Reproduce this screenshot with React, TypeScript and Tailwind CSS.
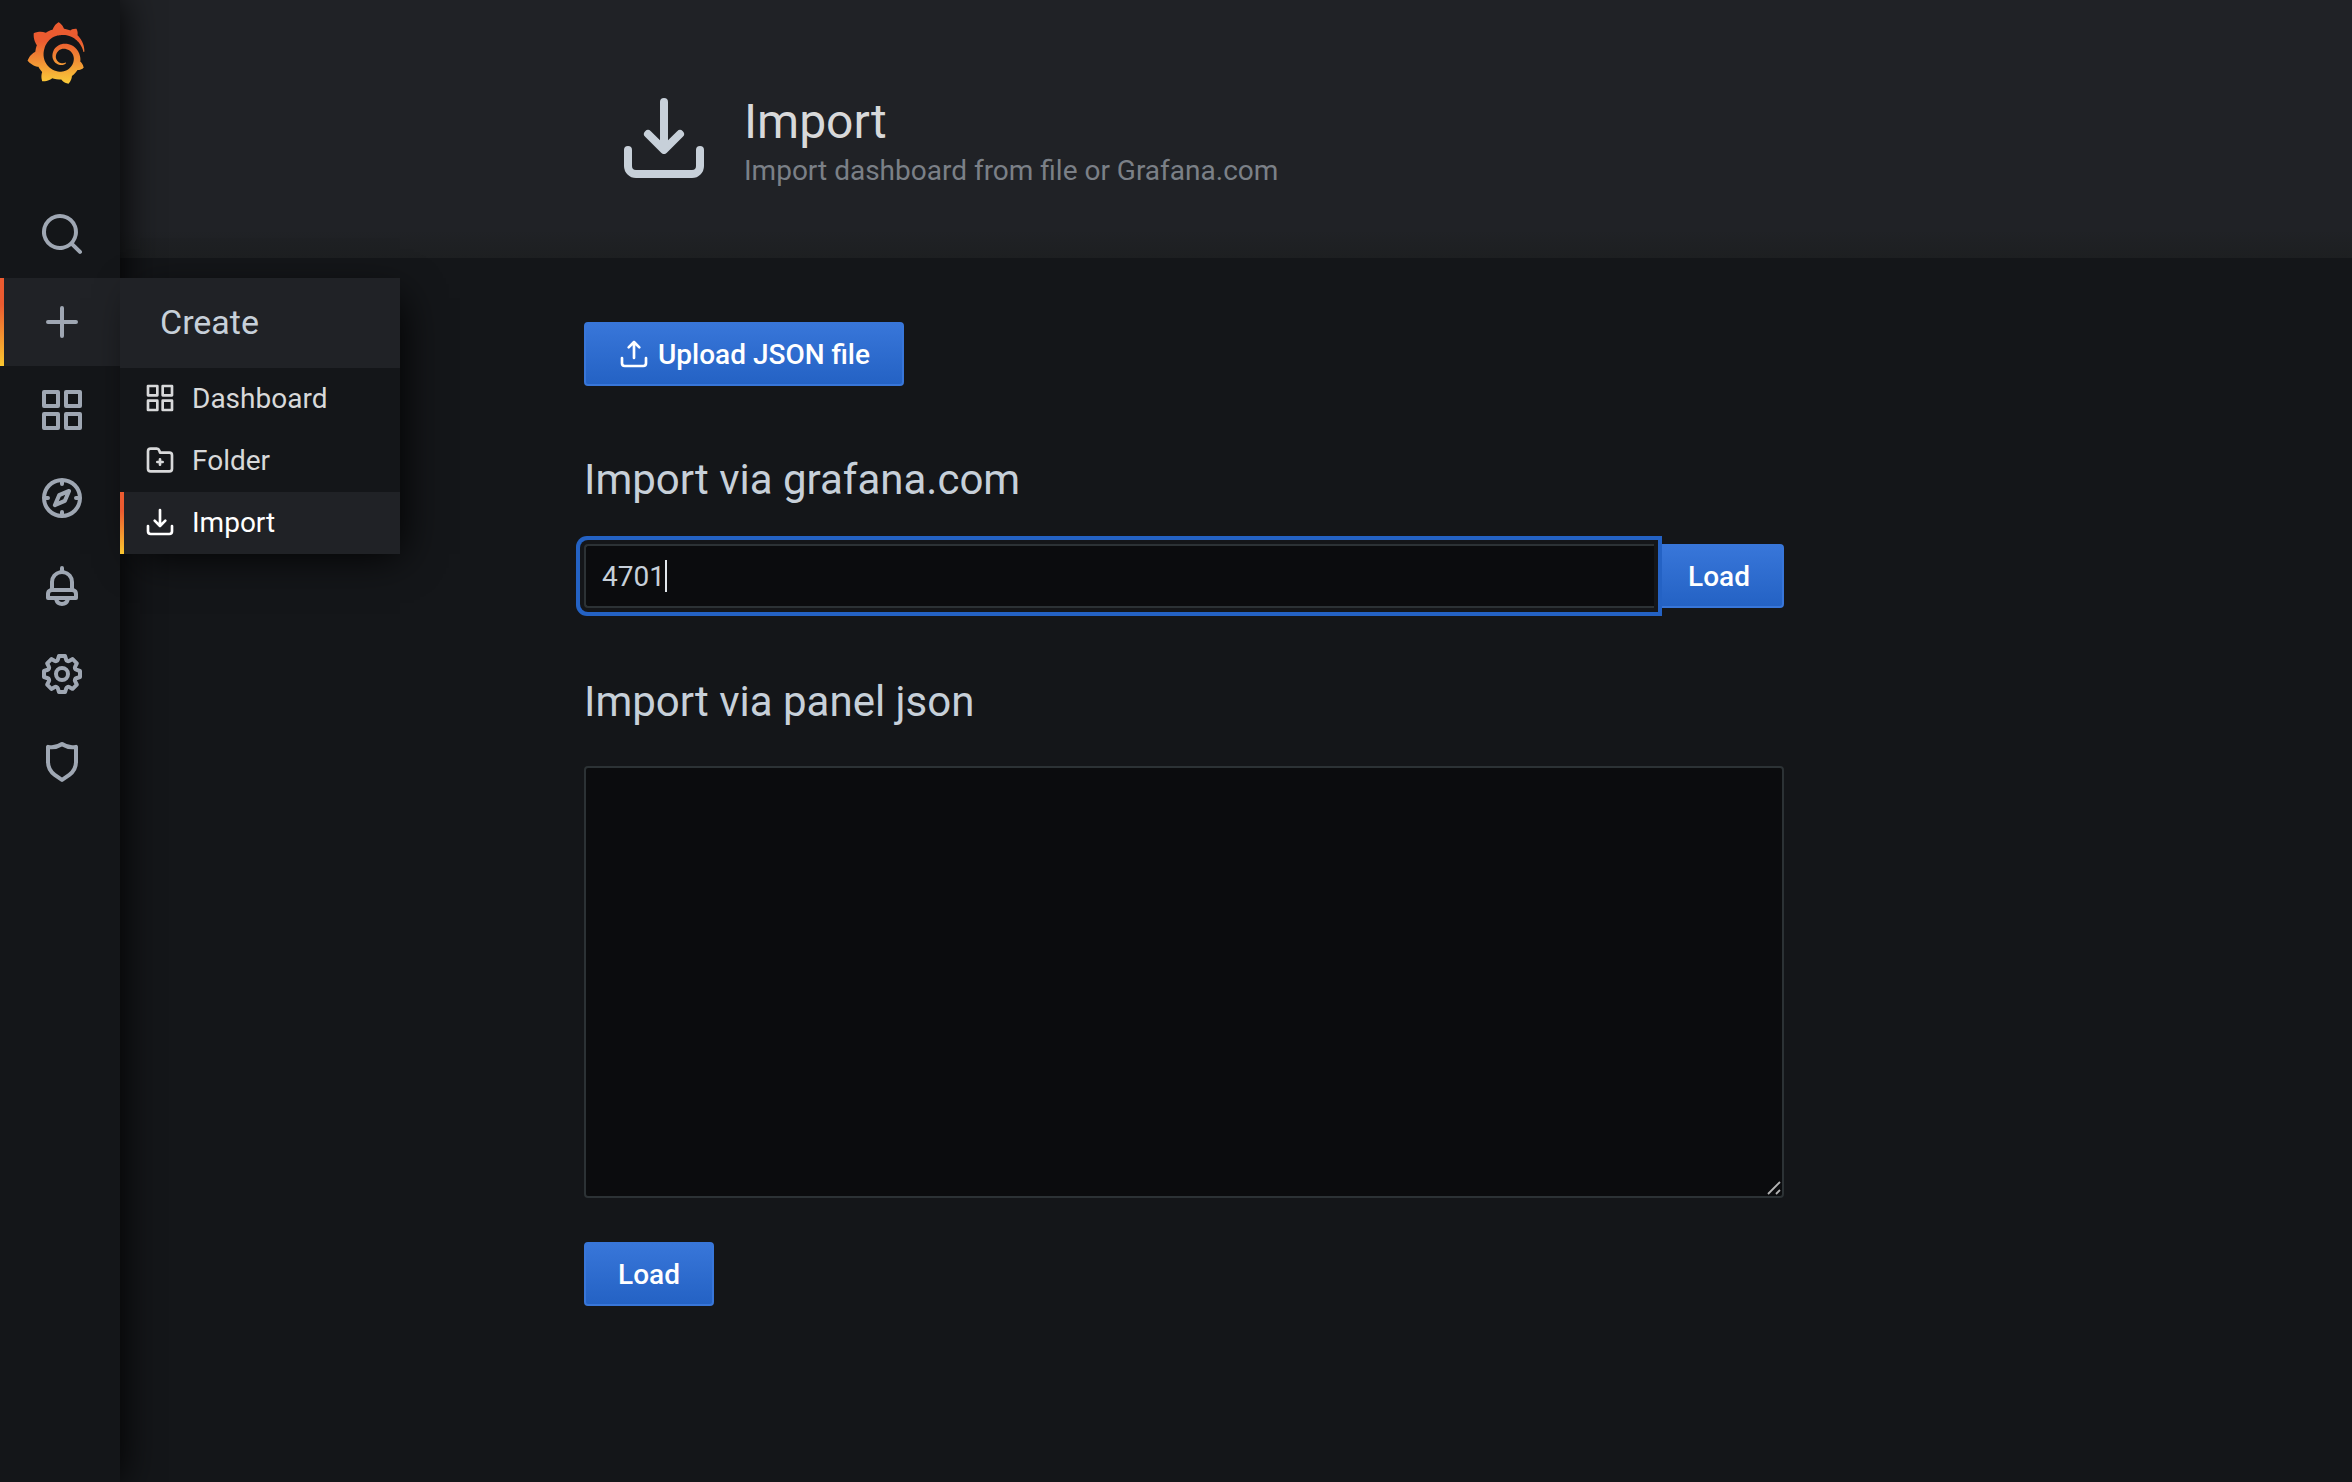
import React from 'react';

const ICONS = {
  search:
    'M21.71,20.29,18,16.61A9,9,0,1,0,16.61,18l3.68,3.68a1,1,0,0,0,1.42,0A1,1,0,0,0,21.71,20.29ZM11,18a7,7,0,1,1,7-7A7,7,0,0,1,11,18Z',
  plus: 'M19,11H13V5a1,1,0,0,0-2,0v6H5a1,1,0,0,0,0,2h6v6a1,1,0,0,0,2,0V13h6a1,1,0,0,0,0-2Z',
  apps:
    'M10,13H3a1,1,0,0,0-1,1v7a1,1,0,0,0,1,1h7a1,1,0,0,0,1-1V14A1,1,0,0,0,10,13ZM9,20H4V15H9ZM21,2H14a1,1,0,0,0-1,1v7a1,1,0,0,0,1,1h7a1,1,0,0,0,1-1V3A1,1,0,0,0,21,2ZM20,9H15V4h5Zm1,4H14a1,1,0,0,0-1,1v7a1,1,0,0,0,1,1h7a1,1,0,0,0,1-1V14A1,1,0,0,0,21,13Zm-1,7H15V15h5ZM10,2H3A1,1,0,0,0,2,3v7a1,1,0,0,0,1,1h7a1,1,0,0,0,1-1V3A1,1,0,0,0,10,2ZM9,9H4V4H9Z',
  compass:
    'M12,2A10,10,0,1,0,22,12,10,10,0,0,0,12,2Zm1,17.93V19a1,1,0,0,0-2,0v.93A8,8,0,0,1,4.07,13H5a1,1,0,0,0,0-2H4.07A8,8,0,0,1,11,4.07V5a1,1,0,0,0,2,0V4.07A8,8,0,0,1,19.93,11H19a1,1,0,0,0,0,2h.93A8,8,0,0,1,13,19.93ZM15.14,7.55l-5,2.12a1,1,0,0,0-.52.52l-2.12,5a1,1,0,0,0,.21,1.1,1,1,0,0,0,.7.3.93.93,0,0,0,.4-.09l5-2.12a1,1,0,0,0,.52-.52l2.12-5a1,1,0,0,0-1.31-1.31Zm-2.49,5.1-2.28,1,1-2.28,2.28-1Z',
  bell:
    'M18,13.18V10a6,6,0,0,0-5-5.91V3a1,1,0,0,0-2,0V4.09A6,6,0,0,0,6,10v3.18A3,3,0,0,0,4,16v2a1,1,0,0,0,1,1H8.14a4,4,0,0,0,7.72,0H19a1,1,0,0,0,1-1V16A3,3,0,0,0,18,13.18ZM8,10a4,4,0,0,1,8,0v3H8Zm4,10a2,2,0,0,1-1.72-1h3.44A2,2,0,0,1,12,20Zm6-3H6V16a1,1,0,0,1,1-1H17a1,1,0,0,1,1,1Z',
  cog:
    'M21.32,9.55l-1.89-.63.89-1.78A1,1,0,0,0,20.13,6L18,3.87a1,1,0,0,0-1.15-.19l-1.78.89-.63-1.89A1,1,0,0,0,13.5,2h-3a1,1,0,0,0-.95.68L8.92,4.57,7.14,3.68A1,1,0,0,0,6,3.87L3.87,6a1,1,0,0,0-.19,1.15l.89,1.78-1.89.63A1,1,0,0,0,2,10.5v3a1,1,0,0,0,.68.95l1.89.63-.89,1.78A1,1,0,0,0,3.87,18L6,20.13a1,1,0,0,0,1.15.19l1.78-.89.63,1.89a1,1,0,0,0,.95.68h3a1,1,0,0,0,.95-.68l.63-1.89,1.78.89A1,1,0,0,0,18,20.13L20.13,18a1,1,0,0,0,.19-1.15l-.89-1.78,1.89-.63A1,1,0,0,0,22,13.5v-3A1,1,0,0,0,21.32,9.55ZM20,12.78l-1.2.4A2,2,0,0,0,17.64,16l.57,1.14-1.1,1.1L16,17.64a2,2,0,0,0-2.79,1.16l-.4,1.2H11.22l-.4-1.2A2,2,0,0,0,8,17.64l-1.14.57-1.1-1.1L6.36,16A2,2,0,0,0,5.2,13.18L4,12.78V11.22l1.2-.4A2,2,0,0,0,6.36,8L5.79,6.89l1.1-1.1L8,6.36A2,2,0,0,0,10.82,5.2l.4-1.2h1.56l.4,1.2A2,2,0,0,0,16,6.36l1.14-.57,1.1,1.1L17.64,8a2,2,0,0,0,1.16,2.79l1.2.4ZM12,8a4,4,0,1,0,4,4A4,4,0,0,0,12,8Zm0,6a2,2,0,1,1,2-2A2,2,0,0,1,12,14Z',
  shield:
    'M19.63,3.65a1,1,0,0,0-.84-.2,8,8,0,0,1-6.22-1.27,1,1,0,0,0-1.14,0A8,8,0,0,1,5.21,3.45a1,1,0,0,0-.84.2A1,1,0,0,0,4,4.43v7.45a9,9,0,0,0,3.77,7.33l3.65,2.6a1,1,0,0,0,1.16,0l3.65-2.6A9,9,0,0,0,20,11.88V4.43A1,1,0,0,0,19.63,3.65ZM18,11.88a7,7,0,0,1-2.93,5.7L12,19.77,8.93,17.58A7,7,0,0,1,6,11.88V5.58a10,10,0,0,0,6-1.39,10,10,0,0,0,6,1.39Z',
  folderPlus:
    'M14,12.5H13v-1a1,1,0,0,0-2,0v1H10a1,1,0,0,0,0,2h1v1a1,1,0,0,0,2,0v-1h1a1,1,0,0,0,0-2Zm5-7H12.72l-.32-1a3,3,0,0,0-2.84-2H5a3,3,0,0,0-3,3v13a3,3,0,0,0,3,3H19a3,3,0,0,0,3-3V8.5A3,3,0,0,0,19,5.5Zm1,13a1,1,0,0,1-1,1H5a1,1,0,0,1-1-1V5.5a1,1,0,0,1,1-1H9.56a1,1,0,0,1,.95.68l.54,1.64A1,1,0,0,0,12,7.5h7a1,1,0,0,1,1,1Z',
  import:
    'M21,14a1,1,0,0,0-1,1v4a1,1,0,0,1-1,1H5a1,1,0,0,1-1-1V15a1,1,0,0,0-2,0v4a3,3,0,0,0,3,3H19a3,3,0,0,0,3-3V15A1,1,0,0,0,21,14Zm-9.71,1.71a1,1,0,0,0,.33.21.94.94,0,0,0,.76,0,1,1,0,0,0,.33-.21l4-4a1,1,0,0,0-1.42-1.42L13,12.59V3a1,1,0,0,0-2,0v9.59l-2.29-2.3a1,1,0,1,0-1.42,1.42Z',
  upload:
    'M8.71,7.71,11,5.41V15a1,1,0,0,0,2,0V5.41l2.29,2.3a1,1,0,0,0,1.42,0,1,1,0,0,0,0-1.42l-4-4a1,1,0,0,0-.33-.21,1,1,0,0,0-.76,0,1,1,0,0,0-.33.21l-4,4A1,1,0,1,0,8.71,7.71ZM21,14a1,1,0,0,0-1,1v4a1,1,0,0,1-1,1H5a1,1,0,0,1-1-1V15a1,1,0,0,0-2,0v4a3,3,0,0,0,3,3H19a3,3,0,0,0,3-3V15A1,1,0,0,0,21,14Z',
};

type IconName = keyof typeof ICONS;

function Icon({ name, className }: { name: IconName; className: string }) {
  return (
    <svg viewBox="0 0 24 24" fill="currentColor" className={className} aria-hidden="true">
      <path d={ICONS[name]} />
    </svg>
  );
}

function GrafanaLogo() {
  return (
    <svg viewBox="0 0 351 365" className="h-[62px] w-[60px]" aria-label="Grafana">
      <defs>
        <linearGradient id="logo" gradientUnits="userSpaceOnUse" x1="175.5" y1="445.5" x2="175.5" y2="114">
          <stop offset="0" stopColor="#FFF13C" />
          <stop offset="1" stopColor="#EB5B30" />
        </linearGradient>
      </defs>
      <path
        fill="url(#logo)"
        d="M342,161.2c-0.6-6.1-1.6-13.1-3.6-20.9c-2-7.7-5-16.2-9.4-25c-4.4-8.8-10.1-17.9-17.5-26.8c-2.9-3.5-6.1-6.9-9.5-10.2c5.1-20.3-6.2-37.9-6.2-37.9c-19.5-1.2-31.9,6.1-36.5,9.4c-0.8-0.3-1.5-0.7-2.3-1c-3.3-1.3-6.7-2.6-10.3-3.7c-3.5-1.1-7.1-2.1-10.8-3c-3.7-0.9-7.4-1.6-11.2-2.2c-0.7-0.1-1.3-0.2-2-0.3c-8.5-27.2-32.9-38.6-32.9-38.6c-27.3,17.3-32.4,41.5-32.4,41.5s-0.1,0.5-0.3,1.4c-1.5,0.4-3,0.9-4.5,1.3c-2.1,0.6-4.2,1.4-6.2,2.2c-2.1,0.8-4.1,1.6-6.2,2.5c-4.1,1.8-8.2,3.8-12.2,6c-3.9,2.2-7.7,4.6-11.4,7.1c-0.5-0.2-1-0.4-1-0.4c-37.8-14.4-71.3,2.9-71.3,2.9c-3.1,40.2,15.1,65.5,18.7,70.1c-0.9,2.5-1.7,5-2.5,7.5c-2.8,9.1-4.9,18.4-6.2,28.1c-0.2,1.4-0.4,2.8-0.5,4.2C18.8,192.7,8.5,228,8.5,228c29.1,33.5,63.1,35.6,63.1,35.6c0,0,0.1-0.1,0.1-0.1c4.3,7.7,9.3,15,14.9,21.9c2.4,2.9,4.8,5.6,7.4,8.3c-10.6,30.4,1.5,55.6,1.5,55.6c32.4,1.2,53.7-14.2,58.2-17.7c3.2,1.1,6.5,2.1,9.8,2.9c10,2.6,20.2,4.1,30.4,4.5c2.5,0.1,5.1,0.2,7.6,0.1l1.2,0l0.8,0l1.6,0l1.6-0.1l0,0.1c15.3,21.8,42.1,24.9,42.1,24.9c19.1-20.1,20.2-40.1,20.2-44.4l0,0c0,0,0-0.1,0-0.3c0-0.4,0-0.6,0-0.6l0,0c0-0.3,0-0.6,0-0.9c4-2.8,7.8-5.8,11.4-9.1c7.6-6.9,14.3-14.8,19.9-23.3c0.5-0.8,1-1.6,1.5-2.4c21.6,1.2,36.9-13.4,36.9-13.4c-3.6-22.5-16.4-33.5-19.1-35.6l0,0c0,0-0.1-0.1-0.3-0.2c-0.2-0.1-0.2-0.2-0.2-0.2c0,0,0,0,0,0c-0.1-0.1-0.3-0.2-0.5-0.3c0.1-1.4,0.2-2.7,0.3-4.1c0.2-2.4,0.2-4.9,0.2-7.3l0-1.8l0-0.9l0-0.5c0-0.6,0-0.4,0-0.6l-0.1-1.5l-0.1-2c0-0.7-0.1-1.3-0.2-1.9c-0.1-0.6-0.1-1.3-0.2-1.9l-0.2-1.9l-0.3-1.9c-0.4-2.5-0.8-4.9-1.4-7.4c-2.3-9.7-6.1-18.9-11-27.2c-5-8.3-11.2-15.6-18.3-21.8c-7-6.2-14.9-11.2-23.1-14.9c-8.3-3.7-16.9-6.1-25.5-7.2c-4.3-0.6-8.6-0.8-12.9-0.7l-1.6,0l-0.4,0c-0.1,0-0.6,0-0.5,0l-0.7,0l-1.6,0.1c-0.6,0-1.2,0.1-1.7,0.1c-2.2,0.2-4.4,0.5-6.5,0.9c-8.6,1.6-16.7,4.7-23.8,9c-7.1,4.3-13.3,9.6-18.3,15.6c-5,6-8.9,12.7-11.6,19.6c-2.7,6.9-4.2,14.1-4.6,21c-0.1,1.7-0.1,3.5-0.1,5.2c0,0.4,0,0.9,0,1.3l0.1,1.4c0.1,0.8,0.1,1.7,0.2,2.5c0.3,3.5,1,6.9,1.9,10.1c1.9,6.5,4.9,12.4,8.6,17.4c3.7,5,8.2,9.1,12.9,12.4c4.7,3.2,9.8,5.5,14.8,7c5,1.5,10,2.1,14.7,2.1c0.6,0,1.2,0,1.7,0c0.3,0,0.6,0,0.9,0c0.3,0,0.6,0,0.9-0.1c0.5,0,1-0.1,1.5-0.1c0.1,0,0.3,0,0.4-0.1l0.5-0.1c0.3,0,0.6-0.1,0.9-0.1c0.6-0.1,1.1-0.2,1.7-0.3c0.6-0.1,1.1-0.2,1.6-0.4c1.1-0.2,2.1-0.6,3.1-0.9c2-0.7,4-1.5,5.7-2.4c1.8-0.9,3.4-2,5-3c0.4-0.3,0.9-0.6,1.3-1c1.6-1.3,1.9-3.7,0.6-5.3c-1.1-1.4-3.1-1.8-4.7-0.9c-0.4,0.2-0.8,0.4-1.2,0.6c-1.4,0.7-2.8,1.3-4.3,1.8c-1.5,0.5-3.1,0.9-4.7,1.2c-0.8,0.1-1.6,0.2-2.5,0.3c-0.4,0-0.8,0.1-1.3,0.1c-0.4,0-0.9,0-1.2,0c-0.4,0-0.8,0-1.2,0c-0.5,0-1,0-1.5-0.1c0,0-0.3,0-0.1,0l-0.2,0l-0.3,0c-0.2,0-0.5,0-0.7-0.1c-0.5-0.1-0.9-0.1-1.4-0.2c-3.7-0.5-7.4-1.6-10.9-3.2c-3.6-1.6-7-3.8-10.1-6.6c-3.1-2.8-5.8-6.1-7.9-9.9c-2.1-3.8-3.6-8-4.3-12.4c-0.3-2.2-0.5-4.5-0.4-6.7c0-0.6,0.1-1.2,0.1-1.8c0,0.2,0-0.1,0-0.1l0-0.2l0-0.5c0-0.3,0.1-0.6,0.1-0.9c0.1-1.2,0.3-2.4,0.5-3.6c1.7-9.6,6.5-19,13.9-26.1c1.9-1.8,3.9-3.4,6-4.9c2.1-1.5,4.4-2.8,6.8-3.9c2.4-1.1,4.8-2,7.4-2.7c2.5-0.7,5.1-1.1,7.8-1.4c1.3-0.1,2.6-0.2,4-0.2c0.4,0,0.6,0,0.9,0l1.1,0l0.7,0c0.3,0,0,0,0.1,0l0.3,0l1.1,0.1c2.9,0.2,5.7,0.6,8.5,1.3c5.6,1.2,11.1,3.3,16.2,6.1c10.2,5.7,18.9,14.5,24.2,25.1c2.7,5.3,4.6,11,5.5,16.9c0.2,1.5,0.4,3,0.5,4.5l0.1,1.1l0.1,1.1c0,0.4,0,0.8,0,1.1c0,0.4,0,0.8,0,1.1l0,1l0,1.1c0,0.7-0.1,1.9-0.1,2.6c-0.1,1.6-0.3,3.3-0.5,4.9c-0.2,1.6-0.5,3.2-0.8,4.8c-0.3,1.6-0.7,3.2-1.1,4.7c-0.8,3.1-1.8,6.2-3,9.3c-2.4,6-5.6,11.8-9.4,17.1c-7.7,10.6-18.2,19.2-30.2,24.7c-6,2.7-12.3,4.7-18.8,5.7c-3.2,0.6-6.5,0.9-9.8,1l-0.6,0l-0.5,0l-1.1,0l-1.6,0l-0.8,0c0.4,0-0.1,0-0.1,0l-0.3,0c-1.8,0-3.5-0.1-5.3-0.3c-7-0.5-13.9-1.8-20.7-3.7c-6.7-1.9-13.2-4.6-19.4-7.8c-12.3-6.6-23.4-15.6-32-26.5c-4.3-5.4-8.1-11.3-11.2-17.4c-3.1-6.1-5.6-12.6-7.4-19.1c-1.8-6.6-2.9-13.3-3.4-20.1l-0.1-1.3l0-0.3l0-0.3l0-0.6l0-1.1l0-0.3l0-0.4l0-0.8l0-1.6l0-0.3c0,0,0,0.1,0-0.1l0-0.6c0-0.8,0-1.7,0-2.5c0.1-3.3,0.4-6.8,0.8-10.2c0.4-3.4,1-6.9,1.7-10.3c0.7-3.4,1.5-6.8,2.5-10.2c1.9-6.7,4.3-13.2,7.1-19.3c5.7-12.2,13.1-23.1,22-31.8c2.2-2.2,4.5-4.2,6.9-6.2c2.4-1.9,4.9-3.7,7.5-5.4c2.5-1.7,5.2-3.2,7.9-4.6c1.3-0.7,2.7-1.4,4.1-2c0.7-0.3,1.4-0.6,2.1-0.9c0.7-0.3,1.4-0.6,2.1-0.9c2.8-1.2,5.7-2.2,8.7-3.1c0.7-0.2,1.5-0.4,2.2-0.7c0.7-0.2,1.5-0.4,2.2-0.6c1.5-0.4,3-0.8,4.5-1.1c0.7-0.2,1.5-0.3,2.3-0.5c0.8-0.2,1.5-0.3,2.3-0.5c0.8-0.1,1.5-0.3,2.3-0.4l1.1-0.2l1.2-0.2c0.8-0.1,1.5-0.2,2.3-0.3c0.9-0.1,1.7-0.2,2.6-0.3c0.7-0.1,1.9-0.2,2.6-0.3c0.5-0.1,1.1-0.1,1.6-0.2l1.1-0.1l0.5-0.1l0.6,0c0.9-0.1,1.7-0.1,2.6-0.2l1.3-0.1c0,0,0.5,0,0.1,0l0.3,0l0.6,0c0.7,0,1.5-0.1,2.2-0.1c2.9-0.1,5.9-0.1,8.8,0c5.8,0.2,11.5,0.9,17,1.9c11.1,2.1,21.5,5.6,31,10.3c9.5,4.6,17.9,10.3,25.3,16.5c0.5,0.4,0.9,0.8,1.4,1.2c0.4,0.4,0.9,0.8,1.3,1.2c0.9,0.8,1.7,1.6,2.6,2.4c0.9,0.8,1.7,1.6,2.5,2.4c0.8,0.8,1.6,1.6,2.4,2.5c3.1,3.3,6,6.6,8.6,10c5.2,6.7,9.4,13.5,12.7,19.9c0.2,0.4,0.4,0.8,0.6,1.2c0.2,0.4,0.4,0.8,0.6,1.2c0.4,0.8,0.8,1.6,1.1,2.4c0.4,0.8,0.7,1.5,1.1,2.3c0.3,0.8,0.7,1.5,1,2.3c1.2,3,2.4,5.9,3.3,8.6c1.5,4.4,2.6,8.3,3.5,11.7c0.3,1.4,1.6,2.3,3,2.1c1.5-0.1,2.6-1.3,2.6-2.8C342.6,170.4,342.5,166.1,342,161.2z"
      />
    </svg>
  );
}

const ACCENT = 'absolute inset-y-0 left-0 w-1 bg-[linear-gradient(#eb5b30_30%,#fac52f_99%)]';

const CREATE_ITEMS: { icon: IconName; label: string; active?: boolean }[] = [
  { icon: 'apps', label: 'Dashboard' },
  { icon: 'folderPlus', label: 'Folder' },
  { icon: 'import', label: 'Import', active: true },
];

function CreateMenu() {
  return (
    <div className="absolute top-0 left-[120px] w-[280px] bg-[#141619] shadow-[10px_10px_40px_-10px_#000]">
      <div className="flex h-[90px] items-center bg-[#202226] pb-0.5 pl-10 text-[34px] text-[#c7d0d9]">Create</div>
      {CREATE_ITEMS.map((item) => (
        <div
          key={item.label}
          className={`relative flex h-[62px] items-center pl-6 text-[28px] ${
            item.active ? 'bg-[#202226] text-white' : 'text-[#d8d9da]'
          }`}
        >
          {item.active && <div className={ACCENT} />}
          <Icon name={item.icon} className="mb-0.5 h-8 w-8" />
          <span className="ml-4">{item.label}</span>
        </div>
      ))}
    </div>
  );
}

const NAV: IconName[] = ['search', 'plus', 'apps', 'compass', 'bell', 'cog', 'shield'];

function Sidebar() {
  return (
    <nav className="relative z-10 flex h-full w-[120px] shrink-0 flex-col bg-[#141619] shadow-[0_0_40px_#000]">
      <div className="h-[190px] pt-[22px] pl-[26px]">
        <GrafanaLogo />
      </div>
      {NAV.map((name) => (
        <div
          key={name}
          className={`relative flex h-[88px] items-center pl-[38px] text-[#9fa7b3] ${
            name === 'plus' ? 'bg-[#202226]' : ''
          }`}
        >
          {name === 'plus' && <div className={ACCENT} />}
          <Icon name={name} className="h-12 w-12" />
          {name === 'plus' && <CreateMenu />}
        </div>
      ))}
    </nav>
  );
}

function Button({
  icon,
  label,
  className,
}: {
  icon?: IconName;
  label: string;
  className: string;
}) {
  return (
    <button
      className={`flex h-16 items-center justify-center border-2 border-[#3876d9] bg-[linear-gradient(#3876d9,#2462c4)] text-[28px] font-medium text-white ${className}`}
    >
      {icon && <Icon name={icon} className="mr-2 h-8 w-8" />}
      <span className="pt-0.5">{label}</span>
    </button>
  );
}

export default function App() {
  return (
    <div className="flex h-[1482px] w-[2352px] overflow-hidden bg-[#141619] font-['Roboto',sans-serif] text-[#c7d0d9]">
      <Sidebar />
      <main className="flex min-w-0 flex-1 flex-col">
        <header className="flex h-[258px] bg-[#202226] bg-[linear-gradient(to_top,#1d1f21,#202226_28px)] pt-[90px] pl-[496px]">
          <Icon name="import" className="h-24 w-24" />
          <div className="ml-8 pt-px">
            <h1 className="text-[48px] leading-[62px] text-[#d8d9da]">Import</h1>
            <div className="text-[28px] leading-9 text-[#7b8087]">Import dashboard from file or Grafana.com</div>
          </div>
        </header>
        <section className="ml-[464px] flex w-[1200px] flex-col items-start pt-16">
          <Button icon="upload" label="Upload JSON file" className="w-80 rounded-[4px]" />

          <h2 className="mt-[65px] text-[42px] leading-[58px]">Import via grafana.com</h2>
          <div className="mt-[35px] flex w-full">
            <div className="relative z-[1] flex h-16 flex-1 items-center rounded-l-[4px] border-2 border-r-0 border-[#2c3235] bg-[#0b0c0e] pl-4 text-[28px] shadow-[0_0_0_4px_#141619,0_0_0_8px_#2462c4]">
              <span className="pt-0.5">4701</span>
              <span className="h-8 w-0.5 bg-[#e1e7ec]" />
            </div>
            <Button label="Load" className="w-[130px] rounded-r-[4px]" />
          </div>

          <h2 className="mt-[65px] text-[42px] leading-[58px]">Import via panel json</h2>
          <div className="mt-[35px] flex h-[432px] w-full items-end justify-end rounded-[4px] border-2 border-[#2c3235] bg-[#0b0c0e] pr-px pb-px">
            <svg viewBox="0 0 14 14" className="h-3.5 w-3.5" fill="none" stroke="#b4b4b4" strokeWidth="1.8">
              <path d="M1 13L13 1M9 13L13 9" />
            </svg>
          </div>

          <Button label="Load" className="mt-11 w-[130px] rounded-[4px]" />
        </section>
      </main>
    </div>
  );
}
